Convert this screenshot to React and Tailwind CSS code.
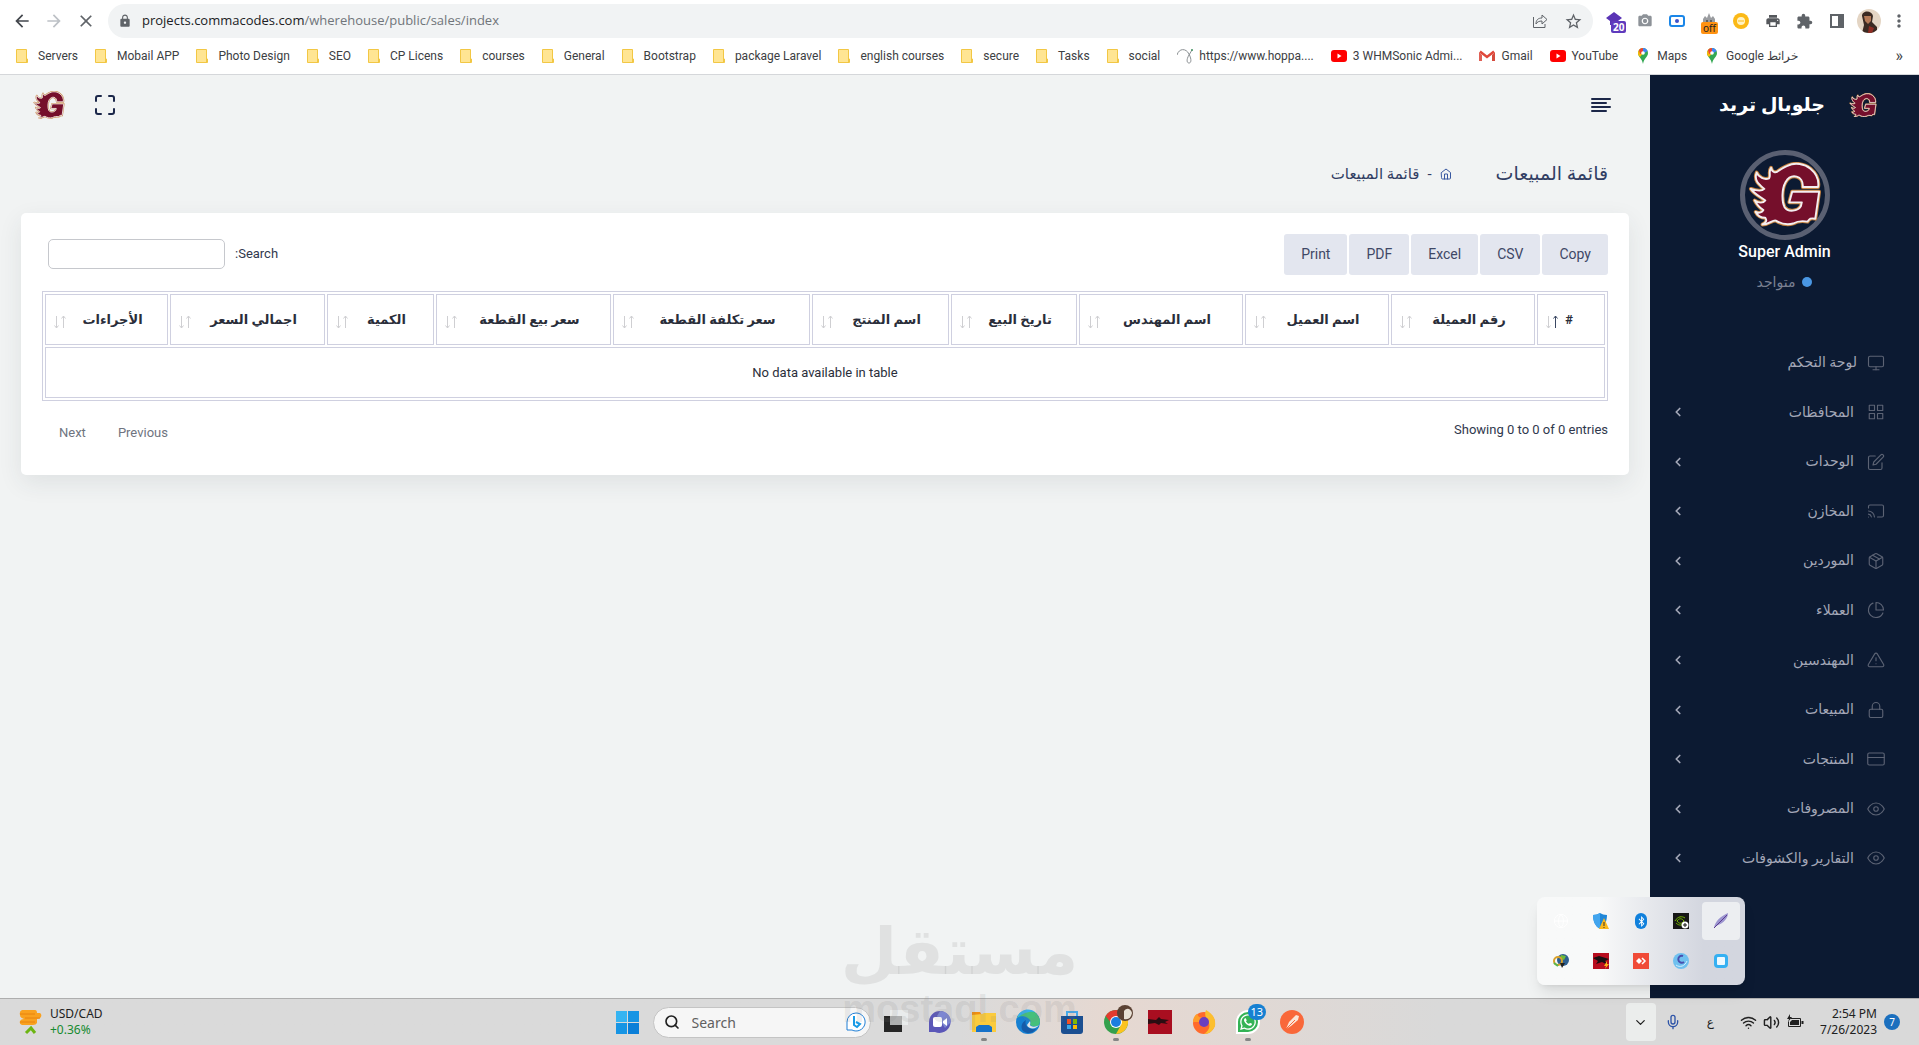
import {
  FiAlertTriangle, FiAlignLeft, FiCast, FiCreditCard, FiEdit, FiEye, FiGrid,
  FiHome, FiLock, FiMaximize, FiMonitor, FiPackage, FiPieChart,
} from 'react-icons/fi';
import {
  MdArrowBack, MdArrowForward, MdCameraAlt, MdClose, MdExtension, MdLock, MdMoreVert,
  MdPrint, MdStarBorder,
} from 'react-icons/md';
import { FaBluetoothB, FaWhatsapp } from 'react-icons/fa';
import { ChevronDown, ChevronLeft, Globe, Mic, Search, Volume2, Wifi } from 'lucide-react';

const flame = 'M40 3 C48 -1 58 1 64 6 C70 11 73 18 72 25 L56 25 C57 13 44 10 38 20 C34 27 34 40 37 46 C41 52 51 50 54 45 L55 41 L42 41 L45 30 L73 30 L69 58 C64 57 63 58 61 61 C55 60 51 60 46 63 C39 65 33 63 28 60 C24 59 22 64 14 64 C18 62 19 60 17 57 C13 57 9 55 7 51 C11 53 14 51 15 49 C10 46 8 43 6 39 C10 42 15 42 17 39 C12 35 6 33 2 27 C8 29 13 30 16 27 C10 22 5 18 8 10 C10 15 16 18 21 16 C23 13 20 9 23 5 C24 10 28 11 31 8 C34 6 37 4 40 3 Z';

const GLogo = ({ className }) => (
  <svg viewBox="-1 -1 77 68" className={className} aria-hidden="true">
    <path d={flame} fill="#750f2b" stroke="#c58240" strokeWidth="4" strokeLinejoin="round" />
    <path d={flame} fill="#750f2b" stroke="#f4eef0" strokeWidth="2" strokeLinejoin="round" />
  </svg>
);

const FolderIcon = () => (
  <svg viewBox="0 0 16 16" className="size-4 shrink-0" aria-hidden="true">
    <path d="M.5 1.500h10v9.500h1v3.500h-11z" fill="#ffe593" stroke="#f2c744" />
    <path d="M10.500 11v3.500" stroke="#f2c744" />
  </svg>
);

const YoutubeIcon = () => (
  <svg viewBox="0 0 16 16" className="size-4 shrink-0" aria-hidden="true">
    <rect y="2" width="16" height="12" rx="3" fill="#f00" />
    <path d="M6.500 5.500v5l4-2.500z" fill="#fff" />
  </svg>
);

const GmailIcon = () => (
  <svg viewBox="0 0 16 16" className="size-4 shrink-0" aria-hidden="true">
    <path d="M0 4v9h3V7z" fill="#e06055" />
    <path d="M16 4v9h-3V7z" fill="#d54b3d" />
    <path d="M1 3.500l7 5.500 7-5.500" fill="none" stroke="#e0483b" strokeWidth="2.500" />
  </svg>
);

const MapsIcon = () => (
  <svg viewBox="0 0 16 16" className="size-4 shrink-0" aria-hidden="true">
    <path d="M8 0a5 5 0 0 0-5 5c0 4 4 5 5 11 1-6 5-7 5-11a5 5 0 0 0-5-5z" fill="#34a853" />
    <path d="M3 5a5 5 0 0 1 5-5l1 4-4 5C4 8 3 7 3 5z" fill="#fbbc04" />
    <path d="M4 2a5 5 0 0 1 4-2v5L5 6z" fill="#ea4335" />
    <path d="M8 0a5 5 0 0 1 4.600 3L8 6z" fill="#4285f4" />
    <circle cx="8" cy="5" r="1.800" fill="#fff" />
  </svg>
);

const CurlIcon = () => (
  <svg viewBox="0 0 16 16" className="size-4 shrink-0" aria-hidden="true" fill="none" stroke="#8b9093">
    <path d="M0 7C2 0 9 0 12 6c3 6 2 9 0 9s-3-3 0-8l3-5" />
    <circle cx="15" cy="2" r="1" fill="#3f8f5f" stroke="none" />
  </svg>
);

const bookmarks = [
  { name: 'Servers', Icon: FolderIcon },
  { name: 'Mobail APP', Icon: FolderIcon },
  { name: 'Photo Design', Icon: FolderIcon },
  { name: 'SEO', Icon: FolderIcon },
  { name: 'CP Licens', Icon: FolderIcon },
  { name: 'courses', Icon: FolderIcon },
  { name: 'General', Icon: FolderIcon },
  { name: 'Bootstrap', Icon: FolderIcon },
  { name: 'package Laravel', Icon: FolderIcon },
  { name: 'english courses', Icon: FolderIcon },
  { name: 'secure', Icon: FolderIcon },
  { name: 'Tasks', Icon: FolderIcon },
  { name: 'social', Icon: FolderIcon },
  { name: 'https://www.hoppa....', Icon: CurlIcon },
  { name: '3 WHMSonic Admi...', Icon: YoutubeIcon },
  { name: 'Gmail', Icon: GmailIcon },
  { name: 'YouTube', Icon: YoutubeIcon },
  { name: 'Maps', Icon: MapsIcon },
  { name: 'Google خرائط', Icon: MapsIcon },
];

const menu = [
  { name: 'لوحة التحكم', Icon: FiMonitor, single: true },
  { name: 'المحافظات', Icon: FiGrid },
  { name: 'الوحدات', Icon: FiEdit },
  { name: 'المخازن', Icon: FiCast },
  { name: 'الموردين', Icon: FiPackage },
  { name: 'العملاء', Icon: FiPieChart },
  { name: 'المهندسين', Icon: FiAlertTriangle },
  { name: 'المبيعات', Icon: FiLock },
  { name: 'المنتجات', Icon: FiCreditCard },
  { name: 'المصروفات', Icon: FiEye },
  { name: 'التقارير والكشوفات', Icon: FiEye },
];

const columns = [
  { name: '#', width: 'w-[68px]', pad: 'pr-6', sorted: true },
  { name: 'رقم العميلة', width: 'w-[144px]', pad: 'pr-2' },
  { name: 'اسم العميل', width: 'w-[144px]', pad: 'pr-2' },
  { name: 'اسم المهندس', width: 'w-[164px]', pad: 'pr-2' },
  { name: 'تاريخ البيع', width: 'w-[126px]', pad: 'pr-2' },
  { name: 'اسم المنتج', width: 'w-[137px]', pad: 'pr-2' },
  { name: 'سعر تكلفة القطعة', width: 'w-[197px]', pad: 'pr-2' },
  { name: 'سعر بيع القطعة', width: 'w-[175px]', pad: 'pr-2' },
  { name: 'الكمية', width: 'w-[107px]', pad: 'pr-2' },
  { name: 'اجمالي السعر', width: 'w-[155px]', pad: 'pr-2' },
  { name: 'الأجراءات', width: 'w-[123px]', pad: 'pr-2' },
];

const exportButtons = ['Copy', 'CSV', 'Excel', 'PDF', 'Print'];

const SortArrows = ({ sorted }) => (
  <svg viewBox="0 0 12 14" className="mt-1 h-[14px] w-3 shrink-0" fill="none" aria-hidden="true">
    <path d="M2.500 1v12M.5 10.500l2 2.500 2-2.500" stroke="#cfcfd2" />
    <path d="M9.500 13V1M7.500 3.500l2-2.500 2 2.500" stroke={sorted ? '#3b4863' : '#cfcfd2'} />
  </svg>
);

const BrowserBar = () => (
  <header className="border-b border-[#d5d7da] bg-white font-['Noto_Sans',sans-serif] text-[#3c4043]">
    <div className="flex h-[42px] items-center pr-[10px] pl-3 text-[#5f6368]">
      <button aria-label="Back" className="flex w-8 text-[#43474d]"><MdArrowBack size={20} /></button>
      <button aria-label="Forward" className="flex w-8 text-[#bdc1c6]"><MdArrowForward size={20} /></button>
      <button aria-label="Stop" className="flex w-8"><MdClose size={20} /></button>
      <div className="flex h-[34px] flex-1 items-center rounded-full bg-[#f1f3f4] px-[10px]">
        <MdLock size={14} />
        <p className="ml-[10px] flex-1 font-['Open_Sans'] text-[13px] text-[#70757a]">
          <span className="text-[#202124]">projects.commacodes.com</span>/wherehouse/public/sales/index
        </p>
        <button aria-label="Share" className="mr-4">
          <svg viewBox="0 0 16 16" className="size-4" fill="none" stroke="currentColor">
            <path d="M1.500 4v10.500H13V11M4 11c0-4 2-6 6-6V2l5 4.500-5 4.500V8C7 8 5 9 4 11z" />
          </svg>
        </button>
        <button aria-label="Bookmark this page"><MdStarBorder size={19} /></button>
      </div>
      <div className="ml-3 flex items-center">
        <div className="relative w-8">
          <svg viewBox="0 0 18 18" className="size-[18px]"><path d="M9 0l8 6-4 3v4H5V9L1 6z" fill="#5a34b5" /></svg>
          <span className="absolute top-[9px] left-[6px] rounded-xs bg-[#5f3bbd] px-[2px] text-[10px] leading-3 font-bold text-white">20</span>
        </div>
        <MdCameraAlt size={16} className="mr-4 text-[#8d9298]" />
        <svg viewBox="0 0 16 16" className="mr-4 size-4">
          <rect x="1" y="3" width="14" height="10" rx="2" fill="#fff" stroke="#1a86e8" strokeWidth="2" />
          <circle cx="8" cy="8" r="2" fill="#3e51c8" />
        </svg>
        <div className="relative w-8">
          <svg viewBox="0 0 16 16" className="size-4"><path d="M2 14V6l2-3 2 2 2-5 2 5 2-2 2 3v8z" fill="#9a9ca0" /><path d="M5 8h2M9 8h2" stroke="#222" /></svg>
          <span className="absolute top-[9px] left-0 rounded-xs bg-[#ff9212] px-[2px] text-[10px] leading-3 text-[#222]">off</span>
        </div>
        <svg viewBox="0 0 16 16" className="mr-4 size-4">
          <circle cx="8" cy="8" r="8" fill="#fbb917" /><circle cx="8" cy="8" r="4" fill="#fff3c4" />
          <path d="M5 8h6" stroke="#fbb917" />
        </svg>
        <MdPrint size={16} className="mr-[15px] text-[#55585c]" />
        <MdExtension size={17} className="mr-4" />
        <svg viewBox="0 0 16 16" className="mr-3 size-4"><path d="M2 2h12v12H2z" fill="none" stroke="currentColor" strokeWidth="2" /><path d="M9 2h5v12H9z" fill="currentColor" /></svg>
        <svg viewBox="0 0 24 24" className="mr-2 size-[24px] rounded-full">
          <path d="M0 0h24v24H0z" fill="#e4d5c4" />
          <path d="M5 7C5 1 15 1 16 7l-1 6 5 5v6H5l2-8z" fill="#3b2a23" />
          <path d="M7 7h7v5l-3 3-3-3z" fill="#b57a58" />
          <path d="M12 17l5 2-2 5h-4z" fill="#8f2d24" />
        </svg>
        <button aria-label="Menu"><MdMoreVert size={20} /></button>
      </div>
    </div>
    <nav className="flex h-8 items-center pb-1 pl-4 font-[Roboto] text-[12px]">
      {bookmarks.map(({ name, Icon }) => (
        <a key={name} href="#" className="mr-[17px] flex items-center gap-[6px] whitespace-nowrap">
          <Icon /> <span>{name}</span>
        </a>
      ))}
      <button className="mr-4 ml-auto text-[16px]" aria-label="More bookmarks">»</button>
    </nav>
  </header>
);

const Sidebar = () => (
  <aside dir="rtl" className="w-[269px] shrink-0 bg-[#0c1a32] text-[#a3a7b7]">
    <div className="flex h-[60px] items-center gap-6 pr-[42px]">
      <GLogo className="w-[28px]" />
      <h1 className="text-[19px] font-bold text-white">جلوبال تريد</h1>
    </div>
    <div className="mt-[15px] flex flex-col items-center">
      <div className="flex size-[90px] items-center justify-center rounded-full border-[5px] border-[#5a6072]">
        <GLogo className="w-[74px] shrink-0" />
      </div>
      <p className="text-[16px] leading-6 font-medium text-white">Super Admin</p>
      <p className="mt-2 flex items-center gap-[7px] text-[14px] leading-5 text-[#7b8192]">
        <span className="size-[10px] rounded-full bg-[#4a97e3]" /> متواجد
      </p>
    </div>
    <nav className="mt-[46px] grid h-[545px] auto-rows-fr">
      {menu.map(({ name, Icon, single }) => (
        <a key={name} href="#" className="flex items-center pr-[34px] pl-[21px]">
          <Icon size={18} strokeWidth={1.5} className="text-[#5c6374]" />
          <span className={single ? 'mr-[10px] flex-1 text-[14px]' : 'mr-[13px] flex-1 text-[14px]'}>{name}</span>
          {!single && <ChevronLeft size={14} strokeWidth={3} />}
        </a>
      ))}
    </nav>
  </aside>
);

const SalesCard = () => (
  <section className="mx-[21px] rounded-[5px] bg-white px-[21px] pt-[21px] pb-8 shadow-[0_8px_24px_rgba(40,50,70,0.09)]">
    <div className="flex items-start justify-between">
      <div className="flex gap-[2px]">
        {exportButtons.map((label) => (
          <button key={label} className="h-[41px] rounded-[3px] bg-[#e3e6ef] px-[17px] text-[14px] text-[#3f4866]">
            {label}
          </button>
        ))}
      </div>
      <div className="mt-[5px] ml-[6px] flex items-center gap-[10px] text-[13px] text-[#30384d]">
        <label htmlFor="table-search">Search:</label>
        <input id="table-search" type="search" className="h-[30px] w-[177px] rounded-[5px] border border-[#c6c8cd] px-2" />
      </div>
    </div>
    <table className="mt-4 w-full table-fixed border-separate border-spacing-[2px] border border-[#cfd0e0] text-[13px] text-[#2a2e3a]">
      <thead>
        <tr>
          {columns.map(({ name, width, pad, sorted }) => (
            <th key={name} className={`h-[51px] border border-[#cfd0e0] p-0 font-bold ${width}`}>
              <div className={`flex items-center pl-[8px] ${pad}`}>
                <span className="flex-1 whitespace-nowrap">{name}</span>
                <SortArrows sorted={sorted} />
              </div>
            </th>
          ))}
        </tr>
      </thead>
      <tbody>
        <tr>
          <td colSpan={11} className="h-[51px] border border-[#cfd0e0] text-center">No data available in table</td>
        </tr>
      </tbody>
    </table>
    <div className="flex items-start justify-between pt-[19px] text-[13px]">
      <p className="text-[#30384d]">Showing 0 to 0 of 0 entries</p>
      <div className="mt-[3px] ml-[17px] flex gap-8 text-[#6f7480]">
        <button>Previous</button>
        <button>Next</button>
      </div>
    </div>
  </section>
);

const TrayPopup = () => (
  <div className="absolute right-[174px] bottom-[60px] grid grid-cols-5 gap-[2px] rounded-lg bg-linear-to-r from-[#f8f9f9] from-30% to-[#d3d6df] to-80% p-[5px] shadow-lg *:flex *:size-[38px] *:items-center *:justify-center *:rounded">
    <span><Globe size={16} className="text-white" strokeWidth={1.5} /></span>
    <span>
      <svg viewBox="0 0 16 16" className="size-4"><path d="M0 2c3 0 5-1 7-2 2 1 4 2 7 2 0 6-2 11-7 14C2 13 0 8 0 2z" fill="#1f86d8" /><path d="M7 0v16C2 13 0 8 0 2c3 0 5-1 7-2z" fill="#42a5ee" /><path d="M11 5l5 11H6z" fill="#fbb81c" /><path d="M11 9v4M11 14v1" stroke="#333" /></svg>
    </span>
    <span><i className="flex h-4 w-3 items-center justify-center rounded-full bg-[#1080dc]"><FaBluetoothB size={11} className="text-white" /></i></span>
    <span>
      <svg viewBox="0 0 16 16" className="size-4"><path d="M0 0h16v16H0z" fill="#161616" /><path d="M2 8c3-5 7-5 10-3M4 8c2-3 5-3 7 0-2 3-5 3-7 0M3 10c2 2 5 3 7 1" fill="none" stroke="#76b900" /><circle cx="12" cy="12" r="3.500" fill="#fff" /><path d="M12 10v4M10 12h4" stroke="#111" /></svg>
    </span>
    <span className="bg-[#eceef1]">
      <svg viewBox="0 0 16 16" className="size-4"><path d="M1 15C2 8 8 3 15 0c0 5-4 10-12 13z" fill="#9b94cf" /><path d="M1 15L14 2" stroke="#5c3d91" /></svg>
    </span>
    <span>
      <svg viewBox="0 0 16 16" className="size-4"><circle cx="10" cy="7" r="6" fill="#2e5f8f" /><path d="M8 2l5 1-2 4-4-2z" fill="#6dbb3a" /><ellipse cx="5" cy="8" rx="4" ry="4" fill="none" stroke="#d9a12a" strokeWidth="2" /><path d="M7 10h5l-3 5z" fill="#222" /><path d="M1 10l4 3" stroke="#58b64c" strokeWidth="2" /></svg>
    </span>
    <span>
      <svg viewBox="0 0 16 16" className="size-4"><path d="M0 0h16v16H0z" fill="#b80d1e" /><path d="M0 5l6-2 10 3-4 2 3 4-6-3-6 2 2-3z" fill="#1a1012" /><path d="M14 8l-3 5h2l-1 3 4-5h-2z" fill="#ffb31a" /></svg>
    </span>
    <span>
      <svg viewBox="0 0 16 16" className="size-4"><path d="M0 0h16v16H0z" fill="#f04b38" /><path d="M6 5l3 3-3 3-3-3z" fill="#fff" /><path d="M9 5l3 3-3 3" fill="none" stroke="#fff" strokeWidth="1.500" /></svg>
    </span>
    <span>
      <svg viewBox="0 0 16 16" className="size-4"><circle cx="8" cy="8" r="8" fill="#6fc0ef" /><path d="M10 3a3.500 3.500 0 1 0 1 6" fill="none" stroke="#4a4fae" strokeWidth="2" /><path d="M3 12c4 3 9 1 11-4" fill="none" stroke="#d6efff" /></svg>
    </span>
    <span>
      <svg viewBox="0 0 16 16" className="size-4"><rect x="1" y="1" width="14" height="14" rx="4" fill="#35b0f2" /><rect x="4" y="4" width="8" height="8" rx="1" fill="#eef9ff" /></svg>
    </span>
  </div>
);

const taskApps = [
  { name: 'Task view', art: <><path d="M0 6h18v16H0z" fill="#262626" /><path d="M6 0h18v15H6z" fill="#e9ecec" /><path d="M6 6h12v9H6z" fill="#aeb0b0" /></> },
  { name: 'Chat', art: <><path d="M12 1a11 11 0 1 1-5 21H1V12A11 11 0 0 1 12 1z" fill="#5b57b8" /><path d="M12 1a11 11 0 0 1 11 11l-6 6-8-12z" fill="#7c86d2" /><rect x="5" y="7" width="9" height="10" rx="2" fill="#fff" /><path d="M15 11l4-3v8l-4-3z" fill="#fff" /></> },
  { name: 'Files', running: true, art: <><path d="M0 2h8l2 3H0z" fill="#ef8e12" /><path d="M0 5l10-1 2-1h12v19H0z" fill="#fbcb3d" /><path d="M4 22v-5l3-2h10l3 2v5z" fill="#1672c9" /></> },
  { name: 'Edge', art: <><circle cx="12" cy="12" r="12" fill="#1680d2" /><path d="M1 8C4-2 22-3 24 11c0 5-4 6-8 5-4-2 0-3-2-6C11 6 5 5 1 8z" fill="#45c07c" /><path d="M1 8C4-2 15-2 19 2c-7-1-13 2-18 6z" fill="#36b0ec" /><path d="M10 10c-2 5 2 10 10 9-3 5-9 5-13 2-3-4-1-9 3-11z" fill="#165ba8" /><path d="M14 11c1 3-1 4 1 5 2 1 5 1 8-1-3 5-11 4-12 0z" fill="#dfe4e8" /></> },
  { name: 'Store', art: <><path d="M7 6V2h10v4" fill="none" stroke="#46a8e8" strokeWidth="2" /><path d="M1 6h22v15a3 3 0 0 1-3 3H4a3 3 0 0 1-3-3z" fill="#1b4f91" /><path d="M7 9h4v5H7z" fill="#f25022" /><path d="M13 9h4v5h-4z" fill="#7fba00" /><path d="M7 15h4v4H7z" fill="#38a9ea" /><path d="M13 15h4v4h-4z" fill="#ffb900" /></> },
  { name: 'Chrome', running: true, art: <><circle cx="12" cy="12" r="12" fill="#34a04c" /><path d="M12 0a12 12 0 0 0-10.400 6L8 14l4-7h11A12 12 0 0 0 12 0z" fill="#e33b2e" /><path d="M12 24A12 12 0 0 0 23 7H12l5 8z" fill="#fcc31e" /><circle cx="12" cy="12" r="6" fill="#fff" /><circle cx="12" cy="12" r="5" fill="#1b7ee0" /><circle cx="21" cy="3" r="8" fill="#5b4234" /><path d="M20 1c3-4 7-2 8 2-1 5-4 7-8 6z" fill="#e9e1d6" /></> },
  { name: 'Red Dragon', art: <><path d="M0 0h24v24H0z" fill="#a90e20" /><path d="M0 9l8 1 3-3 2 2 8 1-4 2 3 2-7-1-2 2-4-2-7 1z" fill="#2a0d12" /></> },
  { name: 'Firefox', art: <><circle cx="12" cy="13" r="11" fill="#ff6a2c" /><path d="M14 0c7 4 10 9 9 16-2 5-6 8-11 8 5-3 7-8 4-13-2-3-4-6-2-11z" fill="#fcbf2f" /><path d="M1 12C1 8 3 5 5 4l2 3 4 1-4 4z" fill="#ff9d2a" /><circle cx="12" cy="12" r="5" fill="#6b3fc0" /></> },
  { name: 'WhatsApp', running: true, badge: '13' },
  { name: 'Postman', art: <><circle cx="12" cy="12" r="12" fill="#f9683a" /><path d="M6 19l3-7 7-7 3 1-1 4-7 6z" fill="#fbe6d8" /><path d="M6 19l9-9" stroke="#f9683a" /></> },
];

const Taskbar = () => (
  <footer className="relative flex h-[47px] items-center border-t border-[#aeaeae] bg-linear-to-r from-[#dadada] from-50% via-[#e6d8d1] via-58% to-[#d9d9d9] to-75% font-['Noto_Sans',sans-serif] text-[#202020]">
    <div className="flex flex-1 items-center gap-2 pl-[19px] text-[12px] leading-4">
      <svg viewBox="0 0 23 26" className="h-[26px] w-[23px]">
        <path d="M3 1h13q2 0 2 3h3q2 1 1 4-1 2-4 2v4q-1 2-4 2H3q-3-1-2-4 1-2 4-2Q1 9 1 6q-1-4 2-5z" fill="#f9a11f" />
        <path d="M1 5h15M6 9h15M1 13h15" stroke="#e8820f" />
        <path d="M7 24l5-5 4 5" fill="none" stroke="#6cb512" strokeWidth="3" />
      </svg>
      <p>USD/CAD<br /><span className="text-[#168a30]">+0.36%</span></p>
    </div>
    <div className="flex items-center">
      <button aria-label="Start" className="mr-[14px]">
        <svg viewBox="0 0 23 23" className="size-[23px]"><path d="M0 0h11v11H0z" fill="#35b4f2" /><path d="M12 0h11v11H12zM0 12h11v11H0z" fill="#1795e4" /><path d="M12 12h11v11H12z" fill="#0b7fd8" /></svg>
      </button>
      <label className="mr-[13px] flex h-[31px] w-[218px] items-center rounded-full border border-[#c4c4c4] bg-[#f6f6f6] pr-1 pl-[10px]">
        <Search size={16} strokeWidth={2.5} className="shrink-0" />
        <input placeholder="Search" aria-label="Search" className="ml-3 w-full min-w-0 text-[14px] placeholder:text-[#606060]" />
        <svg viewBox="0 0 20 20" className="size-5 shrink-0">
          <path d="M10 1a9 9 0 1 1-4 17H1v-8a9 9 0 0 1 9-9z" fill="#fff" stroke="#1f7fd6" />
          <path d="M8 4v9l3 2 3-3-4-2" fill="none" stroke="#1a9be6" strokeWidth="2" />
        </svg>
      </label>
      <div className="flex gap-5">
        {taskApps.map(({ name, art, running, badge }) => (
          <button key={name} aria-label={name} className="relative">
            {art
              ? <svg viewBox="0 0 24 24" className="size-6 overflow-visible">{art}</svg>
              : (
                <span className="flex size-6 items-center justify-center rounded-full rounded-bl-none border-2 border-white bg-[#34b355]">
                  <FaWhatsapp size={18} className="text-white" />
                </span>
              )}
            {badge && <span className="absolute -top-[6px] left-3 rounded-full bg-[#1680d2] px-[3px] text-[11px] leading-4 text-white">{badge}</span>}
            {running && <span className="absolute -bottom-[7px] left-[9px] h-[3px] w-[6px] rounded-full bg-[#858585]" />}
          </button>
        ))}
      </div>
    </div>
    <div className="flex flex-1 items-center justify-end pr-[19px]">
      <button aria-label="Hidden icons" className="mr-[9px] flex h-[38px] w-[30px] items-center justify-center rounded bg-[#ebedec]"><ChevronDown size={15} /></button>
      <Mic size={16} className="mr-[26px] text-[#2e54a8]" />
      <span className="mr-[26px] font-['DejaVu_Sans'] text-[12px]">ع</span>
      <Wifi size={17} className="mr-[6px]" />
      <Volume2 size={17} className="mr-[7px]" />
      <svg viewBox="0 0 17 16" className="mr-4 h-4 w-[17px]"><path d="M3.500 4.500h10v8h-12v-5" fill="none" stroke="#202020" /><path d="M5 6h7v5H3V8zM14.500 7h2v3h-2zM3 0L0 5h2L1 8l4-5H3z" fill="#202020" /></svg>
      <p className="mr-[7px] text-right text-[12px] leading-4">2:54 PM<br />7/26/2023</p>
      <span className="flex size-4 items-center justify-center rounded-full bg-[#1b6fbe] text-[10px] text-white">7</span>
    </div>
    <TrayPopup />
    <div className="pointer-events-none absolute bottom-[18px] left-1/2 -translate-x-1/2 text-center font-bold text-[#808080]/15">
      <p className="font-['DejaVu_Sans'] text-[65px] leading-[78px]">مستقل</p>
      <p className="font-['Liberation_Sans'] text-[38px] leading-9">mostaql.com</p>
    </div>
  </footer>
);

const App = () => (
  <div className="flex min-h-screen flex-col bg-[#f1f3f3] font-[Roboto,'DejaVu_Sans',sans-serif]">
    <BrowserBar />
    <div dir="rtl" className="flex flex-1">
      <Sidebar />
      <main className="min-w-0 flex-1">
        <div className="flex h-[60px] items-center pr-[37px] pl-[33px] text-[#1c2749]">
          <button aria-label="Toggle menu"><FiAlignLeft size={24} /></button>
          <button aria-label="Full screen" className="mr-auto"><FiMaximize size={24} /></button>
          <GLogo className="mr-7 w-[32px]" />
        </div>
        <div className="flex h-[78px] items-center pr-[42px] text-[#313e63]">
          <h2 className="text-[19px]">قائمة المبيعات</h2>
          <FiHome size={12} className="mr-11 text-[#3858a0]" />
          <span className="mx-2 text-[15px]">-</span>
          <span className="text-[15px]">قائمة المبيعات</span>
        </div>
        <SalesCard />
      </main>
    </div>
    <Taskbar />
  </div>
);

export default App;
